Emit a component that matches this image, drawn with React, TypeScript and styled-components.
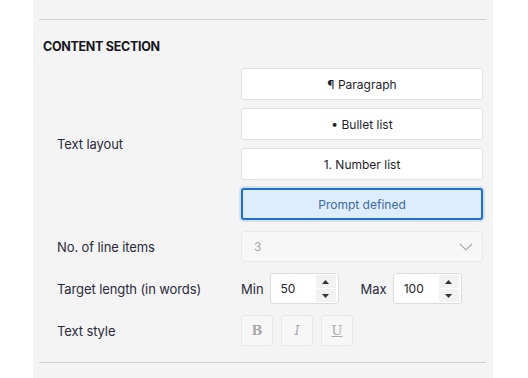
import React, { useState } from 'react';
import styled, { createGlobalStyle } from 'styled-components';

const Global = createGlobalStyle`
  html, body { margin: 0; padding: 0; background: #ffffff; }
  body { font-family: Inter, "Noto Sans", "Liberation Sans", sans-serif; color: #23232f; }
  * { box-sizing: border-box; }
`;

const Panel = styled.div`
  margin-left: 33px;
  width: 460px;
  height: 378px;
  overflow: hidden;
  background: #f4f4f4;
  padding: 0 7px 0 6px;
`;

const Divider = styled.div<{ $top: number }>`
  height: 1px;
  background: #cfcfcf;
  margin-top: ${p => p.$top}px;
`;

const Title = styled.h3`
  margin: 19px 0 14px 4px;
  font-size: 12.5px;
  line-height: 15px;
  font-weight: 700;
  letter-spacing: -0.3px;
  color: #161620;
`;

const Form = styled.div`
  display: grid;
  grid-template-columns: 184px 242px;
  row-gap: 11px;
  padding-left: 18px;
  align-items: center;
`;

const Label = styled.div`
  font-size: 13px;
  color: #2a2a3a;
  letter-spacing: -0.1px;
`;

const Stack = styled.div`
  display: flex;
  flex-direction: column;
  gap: 8px;
`;

const Choice = styled.button<{ $active?: boolean }>`
  height: 32px;
  width: 100%;
  font-family: inherit;
  font-size: 12px;
  border-radius: 3px;
  cursor: pointer;
  background: ${p => (p.$active ? '#deedfd' : '#ffffff')};
  border: ${p => (p.$active ? '2px solid #1f6fd0' : '1px solid #e2e2e2')};
  color: ${p => (p.$active ? '#3f69a6' : '#1d1d28')};
  box-shadow: ${p => (p.$active ? '0 0 0 2px rgba(31,111,208,0.15)' : 'none')};
`;

const Select = styled.div`
  height: 31px;
  display: flex;
  align-items: center;
  justify-content: space-between;
  padding: 0 9px 0 12px;
  background: #f7f7f7;
  border: 1px solid #e8e8e8;
  border-radius: 4px;
  font-size: 12px;
  color: #a8a8a8;
`;

const RangeRow = styled.div`
  display: flex;
  align-items: center;
  font-size: 13px;
  color: #2a2a3a;
`;

const RangeLabel = styled.span<{ $gap: number }>`
  margin-right: ${p => p.$gap}px;
`;

const NumberBox = styled.div<{ $after: number }>`
  width: 69px;
  height: 31px;
  display: flex;
  align-items: center;
  justify-content: space-between;
  padding: 0 2px 0 10px;
  margin-right: ${p => p.$after}px;
  background: #ffffff;
  border: 1px solid #dcdcdc;
  border-radius: 3px;
  font-size: 12px;
  color: #1d1d28;
`;

const Spinner = styled.div`
  width: 20px;
  height: 27px;
  display: flex;
  flex-direction: column;
  gap: 1px;
`;

const SpinHalf = styled.div`
  flex: 1;
  background: #f2f2f2;
  display: flex;
  align-items: center;
  justify-content: center;
`;

const StyleRow = styled.div`
  display: flex;
  gap: 8px;
`;

const StyleBtn = styled.button`
  width: 32px;
  height: 31px;
  padding: 0;
  background: #f7f7f7;
  border: 1px solid #e6e6e6;
  border-radius: 3px;
  font-family: "DejaVu Serif", "Liberation Serif", serif;
  font-size: 13px;
  color: #a9a9a9;
`;

const NextStub = styled.div`
  margin: 15px 0 0 209px;
  height: 20px;
  border-top: 1px solid #e2e2e2;
  border-radius: 3px 3px 0 0;
  background: #f6f6f6;
`;

const Caret = ({ up }: { up?: boolean }) => (
  <svg width="7" height="4" viewBox="0 0 7 4">
    <path d={up ? 'M0 4 L3.5 0 L7 4 Z' : 'M0 0 L3.5 4 L7 0 Z'} fill="#333" />
  </svg>
);

const Chevron = () => (
  <svg width="14" height="8" viewBox="0 0 14 8">
    <path d="M1 1 L7 7 L13 1" fill="none" stroke="#aaa" strokeWidth="1.1" />
  </svg>
);

const NumberInput = ({ value, after }: { value: number; after: number }) => (
  <NumberBox $after={after}>
    <span>{value}</span>
    <Spinner>
      <SpinHalf><Caret up /></SpinHalf>
      <SpinHalf><Caret /></SpinHalf>
    </Spinner>
  </NumberBox>
);

const layouts = ['¶ Paragraph', '• Bullet list', '1. Number list', 'Prompt defined'];

export default function App() {
  const [layout, setLayout] = useState(3);
  return (
    <>
      <Global />
      <Panel>
        <Divider $top={19} />
        <Title>CONTENT SECTION</Title>
        <Form>
          <Label>Text layout</Label>
          <Stack>
            {layouts.map((l, i) => (
              <Choice key={l} $active={i === layout} onClick={() => setLayout(i)}>
                {l}
              </Choice>
            ))}
          </Stack>

          <Label>No. of line items</Label>
          <Select>
            <span>3</span>
            <Chevron />
          </Select>

          <Label>Target length (in words)</Label>
          <RangeRow>
            <RangeLabel $gap={6}>Min</RangeLabel>
            <NumberInput value={50} after={22} />
            <RangeLabel $gap={6}>Max</RangeLabel>
            <NumberInput value={100} after={0} />
          </RangeRow>

          <Label>Text style</Label>
          <StyleRow>
            <StyleBtn style={{ fontWeight: 700 }}>B</StyleBtn>
            <StyleBtn style={{ fontStyle: 'italic' }}>I</StyleBtn>
            <StyleBtn style={{ textDecoration: 'underline' }}>U</StyleBtn>
          </StyleRow>
        </Form>
        <Divider $top={16} />
        <NextStub />
      </Panel>
    </>
  );
}
